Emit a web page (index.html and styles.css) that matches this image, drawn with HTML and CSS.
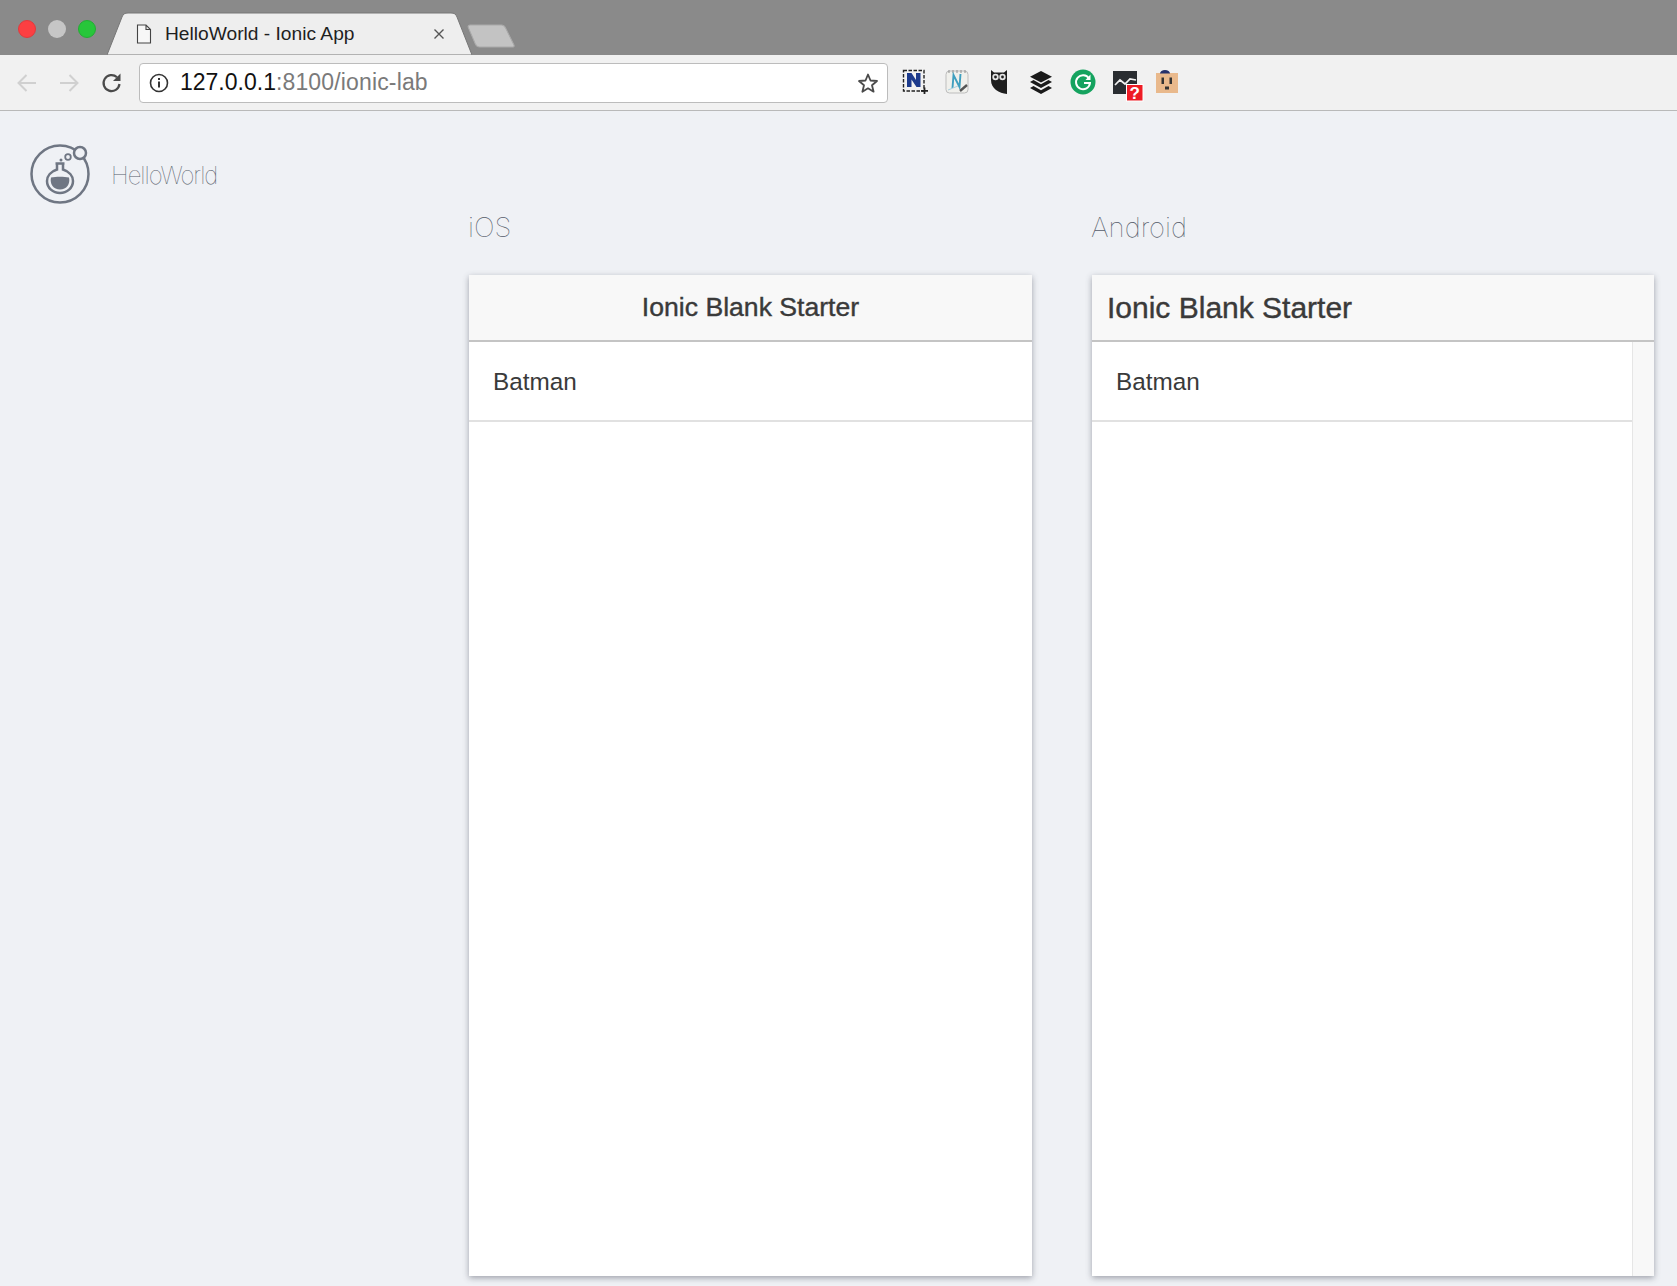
FILE: index.html
```html
<!DOCTYPE html>
<html lang="en">
<head>
  <meta charset="UTF-8" />
  <meta name="viewport" content="width=device-width, initial-scale=1.0"/>
  <title>HelloWorld - Ionic App</title>
  <link rel="stylesheet" href="styles.css">
</head>
<body>
  <div class="tabstrip">
    <div class="lights">
      <span class="light red"></span>
      <span class="light grey"></span>
      <span class="light green"></span>
    </div>
    <div class="tab">
      <svg class="tab-shape" width="365" height="43" viewBox="0 0 365 43">
        <path d="M0 43 L15 5 C16 2 18 1 21 1 L344 1 C347 1 349 2 350 5 L365 43 Z" fill="#eeeeee" stroke="#777777" stroke-width="1"/>
      </svg>
      <svg class="tab-file" width="16" height="20" viewBox="0 0 16 20">
        <path d="M1.5 1 H10 L14.5 5.5 V19 H1.5 Z M10 1 V5.5 H14.5" fill="#f7f7f7" stroke="#444444" stroke-width="1.1"/>
      </svg>
      <span class="tab-title">HelloWorld - Ionic App</span>
      <svg class="tab-close" width="12" height="12" viewBox="0 0 12 12">
        <path d="M1.5 1.5 L10.5 10.5 M10.5 1.5 L1.5 10.5" stroke="#555555" stroke-width="1.4"/>
      </svg>
    </div>
    <svg class="new-tab" width="48" height="24" viewBox="0 0 46 24" preserveAspectRatio="none">
      <path d="M1 3 C1 1.5 2 1 3 1 L33 1 C35 1 36 2 37 4 L45 21 C45.500 22.500 45 23 43 23 L12 23 C10 23 9 22 8 20 Z" fill="#c3c3c3" stroke="#a9a9a9"/>
    </svg>
  </div>

  <div class="toolbar">
    <div class="nav-buttons">
      <svg width="22" height="20" viewBox="0 0 22 20"><path d="M20 10 H2.500 M10.500 2 L2.500 10 L10.500 18" fill="none" stroke="#d0d0d0" stroke-width="2"/></svg>
      <svg width="22" height="20" viewBox="0 0 22 20"><path d="M2 10 H19.500 M11.500 2 L19.500 10 L11.500 18" fill="none" stroke="#d0d0d0" stroke-width="2"/></svg>
      <svg class="reload" width="22" height="22" viewBox="0 0 22 22"><path d="M18.500 12 A8 8 0 1 1 16 5.200" fill="none" stroke="#4a4a4a" stroke-width="2.200"/><path d="M19.500 1.500 V9 H12 Z" fill="#4a4a4a"/></svg>
    </div>
    <div class="omnibox">
      <svg class="info-icon" width="20" height="20" viewBox="0 0 20 20">
        <circle cx="10" cy="10" r="8.500" fill="none" stroke="#333333" stroke-width="1.600"/>
        <rect x="9" y="8.500" width="2" height="6" fill="#333333"/>
        <rect x="9" y="5" width="2" height="2" fill="#333333"/>
      </svg>
      <span class="url"><span class="url-host">127.0.0.1</span>:8100/ionic-lab</span>
      <svg class="star" width="22" height="22" viewBox="0 0 22 22">
        <path d="M11 2.500 L13.500 8.500 L20 9 L15 13.300 L16.600 19.700 L11 16.300 L5.400 19.700 L7 13.300 L2 9 L8.500 8.500 Z" fill="none" stroke="#4a4a4a" stroke-width="1.800" stroke-linejoin="round"/>
      </svg>
    </div>
    <div class="extensions">
      <svg width="26" height="26" viewBox="0 0 26 26">
        <rect x="1.500" y="1.500" width="20.500" height="20.500" fill="none" stroke="#222222" stroke-width="1.400" stroke-dasharray="3.500 1.500"/>
        <path d="M5 18 V4 H9.500 L14 11 V4 H18.500 V18 H14.500 L9.500 10.500 V18 Z" fill="#1c3a8c"/>
        <path d="M22.500 18.500 V25 M19 21.800 H26" stroke="#222222" stroke-width="1.800"/>
      </svg>
      <svg width="26" height="26" viewBox="0 0 26 26">
        <rect x="2" y="2" width="22" height="22" rx="3.500" fill="#f0f0ec" stroke="#bdbdbd"/>
        <path d="M5 1 V4 M9 1 V4 M13 1 V4 M17 1 V4 M21 1 V4" stroke="#8f8f8f"/>
        <path d="M8.500 19 L9.500 6 L15.500 18 L16.500 5" fill="none" stroke="#3f9fbf" stroke-width="1.900"/>
        <path d="M4 21 L14 17" stroke="#a8d0de" stroke-width="1"/>
        <path d="M16 22 L23 16" stroke="#555555" stroke-width="2.400"/>
      </svg>
      <svg width="26" height="26" viewBox="0 0 26 26">
        <path d="M5 1 L8 3.500 H18 L21 1 V25 C13 24 5 20 5 11 Z" fill="#1e1e1e"/>
        <circle cx="9.500" cy="8" r="3.200" fill="#e4e4e4"/>
        <circle cx="16.500" cy="8" r="3.200" fill="#e4e4e4"/>
        <circle cx="9.500" cy="8" r="1.400" fill="#1e1e1e"/>
        <circle cx="16.500" cy="8" r="1.400" fill="#1e1e1e"/>
      </svg>
      <svg width="26" height="26" viewBox="0 0 26 26">
        <path d="M13 2 L24 7.700 L13 13.400 L2 7.700 Z" fill="#1a1a1a"/>
        <path d="M5.500 11 L2 13 L13 19 L24 13 L20.500 11 L13 15.200 Z" fill="#1a1a1a"/>
        <path d="M5.500 17 L2 19 L13 25 L24 19 L20.500 17 L13 21.200 Z" fill="#1a1a1a"/>
      </svg>
      <svg width="26" height="26" viewBox="0 0 26 26">
        <circle cx="13" cy="13" r="12.500" fill="#15a35f"/>
        <path d="M19 9.500 A7 7 0 1 0 20 14 H14" fill="none" stroke="#ffffff" stroke-width="2"/>
        <path d="M20.500 5.500 V11 H15.500 Z" fill="#ffffff"/>
      </svg>
      <svg class="ext-wide" width="32" height="32" viewBox="0 0 32 32">
        <rect x="1" y="1" width="24" height="23" fill="#2a2d31"/>
        <path d="M3 15 L8 10 L13 14 L18 9 L24 10" fill="none" stroke="#f2f2f2" stroke-width="1.700"/>
        <rect x="14.500" y="14.500" width="16.500" height="16.500" fill="#ee1c25" stroke="#ffffff"/>
        <text class="ext-badge" x="22.700" y="28.500" text-anchor="middle">?</text>
      </svg>
      <svg width="26" height="26" viewBox="0 0 26 26">
        <rect x="2" y="4" width="22" height="20" fill="#e9b98c"/>
        <path d="M6 4.500 A5 3.500 0 0 1 16 4.500 Z" fill="#25306a"/>
        <rect x="7.500" y="8.500" width="2.500" height="6.500" fill="#333333"/>
        <rect x="15.500" y="8.500" width="2.500" height="6.500" fill="#333333"/>
        <rect x="11" y="17.500" width="4" height="3" fill="#333333"/>
      </svg>
    </div>
  </div>

  <div class="lab">
    <div class="sidebar">
      <svg class="lab-logo" width="62" height="62" viewBox="0 0 62 62">
        <circle cx="30" cy="31" r="28.500" fill="none" stroke="#6f7683" stroke-width="2.500"/>
        <circle cx="50" cy="10" r="6" fill="#eff1f5" stroke="#6f7683" stroke-width="2.500"/>
        <circle cx="38" cy="14" r="2.800" fill="none" stroke="#6f7683" stroke-width="1.800"/>
        <circle cx="31" cy="17" r="1.500" fill="#6f7683"/>
        <path d="M25.500 20.500 H34.500 M27 20.500 V26.500 C21 28.500 17 33 17 38 C17 45 23 50 30 50 C37 50 43 45 43 38 C43 33 39 28.500 33 26.500 V20.500" fill="none" stroke="#6f7683" stroke-width="2.500"/>
        <path d="M21 34.500 C26 33.500 34 33.500 39 34.500 C40.500 41 36.500 46.500 30 46.500 C23.500 46.500 19.500 41 21 34.500 Z" fill="#6f7683"/>
      </svg>
      <span class="lab-name">HelloWorld</span>
    </div>
    <div class="platforms">
      <div class="platform">
        <h2 class="platform-name">iOS</h2>
        <div class="device device-ios">
          <div class="device-header">Ionic Blank Starter</div>
          <div class="device-content">
            <div class="device-list">
              <div class="device-item">Batman</div>
            </div>
          </div>
        </div>
      </div>
      <div class="platform">
        <h2 class="platform-name">Android</h2>
        <div class="device device-android">
          <div class="device-header">Ionic Blank Starter</div>
          <div class="device-content">
            <div class="device-list">
              <div class="device-item">Batman</div>
            </div>
            <div class="device-scrollbar"></div>
          </div>
        </div>
      </div>
    </div>
  </div>
</body>
</html>
```

FILE: styles.css
```css
html, body {
  margin: 0;
  height: 100%;
}

body {
  font-family: "Liberation Sans", Arial, sans-serif;
  background-color: #eff1f5;
  display: flex;
  flex-direction: column;
  overflow: hidden;
}

/* browser chrome */
.tabstrip {
  height: 55px;
  flex: none;
  background-color: #8a8a8a;
  display: flex;
  align-items: flex-end;
  padding-left: 18px;
  box-sizing: border-box;
}

.lights {
  display: flex;
  gap: 12px;
  align-self: flex-start;
  margin-top: 20px;
}

.light {
  width: 18px;
  height: 18px;
  border-radius: 50%;
  box-sizing: border-box;
}

.red { background-color: #fc3f42; border: 1px solid #e2393c; }
.grey { background-color: #c6c6c6; }
.green { background-color: #27c63a; border: 1px solid #22ad33; }

.tab {
  position: relative;
  width: 365px;
  height: 43px;
  margin-left: 11px;
  display: flex;
  align-items: center;
  padding: 0 27px 0 29px;
  box-sizing: border-box;
}

.tab-shape {
  position: absolute;
  left: 0;
  bottom: 0;
}

.tab-file, .tab-title, .tab-close {
  position: relative;
}

.tab-title {
  margin-left: 13px;
  padding-top: 1px;
  font-size: 19.2px;
  color: #1f1f1f;
  flex: 1;
}

.new-tab {
  margin-left: -5px;
  margin-bottom: 7px;
}

.toolbar {
  height: 56px;
  flex: none;
  background-color: #f1f1f1;
  border-bottom: 1px solid #b9b9b9;
  box-sizing: border-box;
  display: flex;
  align-items: center;
  padding-left: 16px;
}

.nav-buttons {
  display: flex;
  align-items: center;
  gap: 20px;
  width: 123px;
}

.reload {
  margin-left: 1px;
}

.omnibox {
  width: 749px;
  height: 40px;
  background-color: #ffffff;
  border: 1px solid #bcbcbc;
  border-radius: 4px;
  box-sizing: border-box;
  display: flex;
  align-items: center;
  padding: 0 8px 0 9px;
}

.url {
  margin-left: 11px;
  font-size: 23px;
  letter-spacing: 0.15px;
  color: #7a7a7a;
  flex: 1;
}

.url-host {
  color: #111111;
  letter-spacing: 0;
}

.extensions {
  display: flex;
  align-items: center;
  gap: 16px;
  margin-left: 14px;
  margin-top: -1px;
}

.ext-wide {
  margin: 2px -6px -6px 0;
}

.ext-badge {
  font-size: 17px;
  font-weight: bold;
  fill: #ffffff;
}

/* lab page */
.lab {
  flex: 1;
  display: flex;
  min-height: 0;
}

.sidebar {
  width: 469px;
  flex: none;
  display: flex;
  align-items: flex-start;
  padding: 32px 0 0 30px;
  box-sizing: border-box;
}

.lab-name {
  margin: 18px 0 0 19px;
  font-family: Inter, sans-serif;
  font-weight: 100;
  font-size: 24px;
  letter-spacing: -1px;
  color: #555c6a;
}

.platforms {
  display: flex;
  gap: 60px;
}

.platform {
  width: 563px;
  display: flex;
  flex-direction: column;
}

.platform-name {
  margin: 0 0 0 -1px;
  padding-top: 100px;
  height: 164px;
  box-sizing: border-box;
  font-family: Inter, sans-serif;
  font-weight: 100;
  font-size: 27.5px;
  line-height: 32px;
  color: #555c6a;
}

.device {
  height: 1001px;
  background-color: #ffffff;
  box-shadow: 0 2px 6px rgba(60, 65, 80, 0.45);
  display: flex;
  flex-direction: column;
  color: #3a3a3a;
}

.device-header {
  height: 67px;
  flex: none;
  background-color: #f8f8f8;
  border-bottom: 2px solid #c4c4c4;
  box-sizing: border-box;
  display: flex;
  align-items: center;
  font-size: 26.6px;
  -webkit-text-stroke: 0.4px #3a3a3a;
}

.device-ios .device-header {
  justify-content: center;
}

.device-android {
  margin-right: 1px;
}

.device-android .device-header {
  padding-left: 15px;
  font-size: 30px;
}

.device-content {
  flex: 1;
  display: flex;
}

.device-list {
  flex: 1;
}

.device-item {
  height: 80px;
  border-bottom: 2px solid #e1e1e1;
  box-sizing: border-box;
  display: flex;
  align-items: center;
  padding: 2px 0 0 24px;
  font-size: 24.3px;
}

.device-scrollbar {
  width: 21px;
  background-color: #f8f8f8;
  border-left: 1px solid #e6e6e6;
}
```
